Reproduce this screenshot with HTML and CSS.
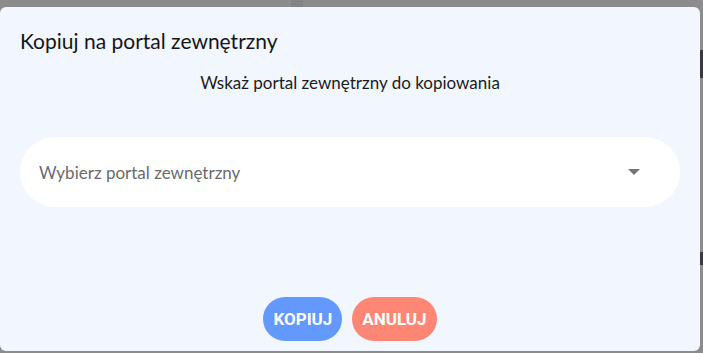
FILE: index.html
```html
<!DOCTYPE html>
<html lang="pl">
<head>
    <meta charset="UTF-8">
    <meta name="viewport" content="width=device-width, initial-scale=1.0">
    <title>Kopiuj na portal zewnętrzny</title>
    <link rel="stylesheet" href="styles.css">
</head>
<body>
    <div class="backdrop">
        <div class="bg-tab"></div>
        <div class="bg-edge bg-edge-top"></div>
        <div class="bg-edge bg-edge-bottom"></div>

        <div class="dialog">
            <h2 class="dialog-title">Kopiuj na portal zewnętrzny</h2>
            <p class="dialog-text">Wskaż portal zewnętrzny do kopiowania</p>

            <div class="select">
                <span class="select-placeholder">Wybierz portal zewnętrzny</span>
                <span class="select-arrow"></span>
            </div>

            <div class="dialog-actions">
                <button type="button" class="btn btn-copy">KOPIUJ</button>
                <button type="button" class="btn btn-cancel">ANULUJ</button>
            </div>
        </div>
    </div>
</body>
</html>
```

FILE: styles.css
```css
html, body {
    margin: 0;
    padding: 0;
}
body {
    font-family: Lato, "Open Sans", sans-serif;
    background-color: #8c8c8c;
    width: 703px;
    height: 353px;
    overflow: hidden;
}
.backdrop {
    position: relative;
    height: 353px;
    padding: 7px 3px 2px 0;
    box-sizing: border-box;
}
/* bits of the page behind the overlay */
.bg-tab {
    position: absolute;
    left: 291px;
    top: 0;
    width: 12px;
    height: 7px;
    background: #828487;
}
.bg-edge {
    position: absolute;
    right: 0;
    width: 3px;
    background: #3a3a3a;
}
.bg-edge-top {
    top: 50px;
    height: 28px;
}
.bg-edge-bottom {
    top: 252px;
    height: 13px;
}
.dialog {
    background-color: #f1f6ff;
    border-radius: 6px;
    height: 344px;
    padding: 0 20px;
    box-sizing: border-box;
    display: flex;
    flex-direction: column;
}
.dialog-title {
    margin: 0;
    padding-top: 21px;
    font-size: 21px;
    font-weight: normal;
    line-height: 25px;
    color: #161616;
}
.dialog-text {
    margin: 0;
    padding-top: 20px;
    text-align: center;
    font-size: 17px;
    line-height: 20px;
    color: #1b1b1b;
}
.select {
    margin-top: 44px;
    height: 70px;
    background: #fff;
    border-radius: 35px;
    display: flex;
    align-items: center;
    justify-content: space-between;
    padding: 0 40px 0 19px;
}
.select-placeholder {
    font-size: 17px;
    color: #6b6b6b;
}
.select-arrow {
    width: 0;
    height: 0;
    border-left: 6px solid transparent;
    border-right: 6px solid transparent;
    border-top: 6px solid #757575;
}
.dialog-actions {
    margin-top: auto;
    margin-bottom: 10px;
    display: flex;
    justify-content: center;
    gap: 10px;
}
.btn {
    height: 44px;
    border: none;
    border-radius: 22px;
    padding: 0 10px;
    color: #fff;
    font-family: Roboto, sans-serif;
    font-weight: bold;
    font-size: 17px;
    cursor: pointer;
}
.btn-copy {
    background-color: #6399fd;
}
.btn-cancel {
    background-color: #fd8674;
}
```
